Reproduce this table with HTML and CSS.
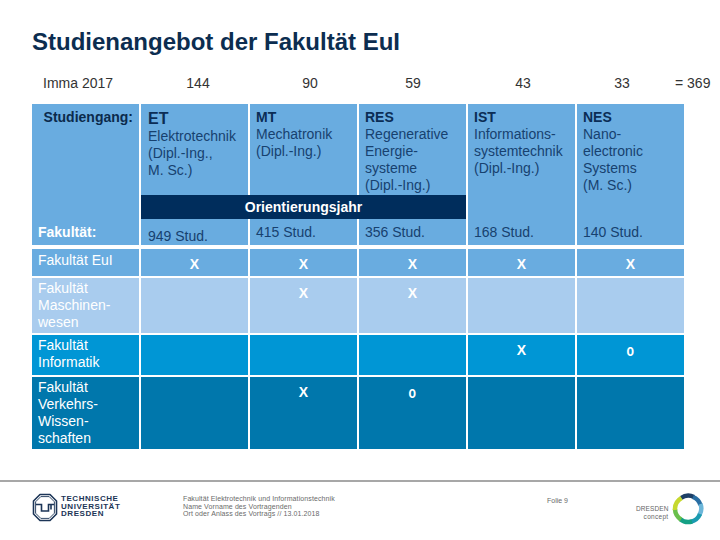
FILE: index.html
```html
<!DOCTYPE html>
<html lang="de">
<head>
<meta charset="utf-8">
<title>Studienangebot der Fakultät EuI</title>
<link rel="stylesheet" href="styles.css">
</head>
<body>
<div class="slide">
  <h1 class="title">Studienangebot der Fakultät EuI</h1>

  <div class="imma">
    <span>Imma 2017</span>
    <span class="num">144</span>
    <span class="num">90</span>
    <span class="num">59</span>
    <span class="num">43</span>
    <span class="num">33</span>
    <span class="sum">= 369</span>
  </div>

  <div class="head">
    <div class="hcell first">
      <span class="lbl-top">Studiengang:</span>
      <span class="lbl-bot">Fakultät:</span>
    </div>
    <div class="hcell c1"><span class="code big">ET</span><span class="desc">Elektrotechnik<br>(Dipl.-Ing.,<br>M. Sc.)</span></div>
    <div class="hcell c2"><span class="code">MT</span><span class="desc">Mechatronik<br>(Dipl.-Ing.)</span></div>
    <div class="hcell c3"><span class="code">RES</span><span class="desc">Regenerative<br>Energie-<br>systeme<br>(Dipl.-Ing.)</span></div>
    <div class="hcell c4 tall"><span class="code">IST</span><span class="desc">Informations-<br>systemtechnik<br>(Dipl.-Ing.)</span><span class="stud">168 Stud.</span></div>
    <div class="hcell c5 tall"><span class="code">NES</span><span class="desc">Nano-<br>electronic<br>Systems<br>(M. Sc.)</span><span class="stud">140 Stud.</span></div>
    <div class="bar">Orientierungsjahr</div>
    <div class="scell s1 low">949 Stud.</div>
    <div class="scell s2">415 Stud.</div>
    <div class="scell s3">356 Stud.</div>
  </div>

  <div class="body">
    <div class="row r-eui">
      <div class="label">Fakultät EuI</div>
      <div class="mark">X</div><div class="mark">X</div><div class="mark">X</div><div class="mark">X</div><div class="mark">X</div>
    </div>
    <div class="row r-mw">
      <div class="label">Fakultät<br>Maschinen-<br>wesen</div>
      <div class="mark"></div><div class="mark">X</div><div class="mark">X</div><div class="mark"></div><div class="mark"></div>
    </div>
    <div class="row r-inf">
      <div class="label">Fakultät<br>Informatik</div>
      <div class="mark"></div><div class="mark"></div><div class="mark"></div><div class="mark">X</div><div class="mark"><span class="o">o</span></div>
    </div>
    <div class="row r-vw">
      <div class="label">Fakultät<br>Verkehrs-<br>Wissen-<br>schaften</div>
      <div class="mark"></div><div class="mark">X</div><div class="mark"><span class="o">o</span></div><div class="mark"></div><div class="mark"></div>
    </div>
  </div>

  <footer class="footer">
    <div class="tu">
      <svg class="tu-emblem" width="26" height="29" viewBox="0 0 26 29">
        <path d="M8 1.5 H18 L24.5 8 V21 L18 27.5 H8 L1.5 21 V8 Z" fill="none" stroke="#1c3557" stroke-width="1.6" stroke-linejoin="round"/>
        <path d="M8.8 3.6 H17.2 L22.4 8.8 V20.2 L17.2 25.4 H8.8 L3.6 20.2 V8.8 Z" fill="none" stroke="#1c3557" stroke-width="0.9" stroke-linejoin="round"/>
        <path d="M4 11.5 H9.5 V18 H16.5 V11.5 H22 M19 11.5 V16.5" fill="none" stroke="#1c3557" stroke-width="1.6"/>
      </svg>
      <div class="tu-name"><span>TECHNISCHE</span><span>UNIVERSITÄT</span><span>DRESDEN</span></div>
    </div>
    <div class="meta">Fakultät Elektrotechnik und Informationstechnik<br>Name Vorname des Vortragenden<br>Ort oder Anlass des Vortrags // 13.01.2018</div>
    <div class="folie">Folie 9</div>
    <div class="concept">
      <div class="concept-text"><span class="dd">DRESDEN</span><span class="cc">concept</span></div>
      <svg class="ring" width="32" height="32" viewBox="0 0 32 32">
        <g fill="none" stroke-width="4.5" stroke-linecap="butt">
          <path d="M9 5 A13 13 0 0 1 22 4" stroke="#1d3f66"/>
          <path d="M21 4 A13 13 0 0 1 28.5 12" stroke="#2a6ea3"/>
          <path d="M28.5 11 A13 13 0 0 1 27.5 22" stroke="#6cb6d9"/>
          <path d="M28 21 A13 13 0 0 1 19 28.7" stroke="#1b9bb0"/>
          <path d="M20 28.5 A13 13 0 0 1 8 26" stroke="#15a085"/>
          <path d="M9 26.5 A13 13 0 0 1 3 16" stroke="#6abf4b"/>
          <path d="M3 17 A13 13 0 0 1 9.5 5" stroke="#c6d82e"/>
        </g>
      </svg>
    </div>
  </footer>
</div>
</body>
</html>
```
FILE: styles.css
```css
html, body {
  margin: 0;
  padding: 0;
  background: #ffffff;
}

.slide {
  width: 720px;
  height: 540px;
  overflow: hidden;
  font-family: "Liberation Sans", Arial, sans-serif;
  color: #333333;
}

.title {
  margin: 0;
  padding: 28px 0 0 32px;
  font-size: 24px;
  line-height: 28px;
  font-weight: bold;
  color: #0c2d50;
}

.imma {
  margin-top: 19px;
  padding-left: 43px;
  display: grid;
  grid-template-columns: 99px 112px 112px 94px 126px 72px auto;
  font-size: 14px;
  line-height: 16px;
  color: #333333;
}
.imma .num { text-align: center; }
.imma .sum { padding-left: 17px; }

/* header block */
.head {
  margin: 13px 0 0 32px;
  display: grid;
  grid-template-columns: repeat(6, 107px);
  grid-template-rows: 91px 24px 26px;
  column-gap: 2px;
}

.hcell {
  background: #69ace0;
  padding: 5px 6px 0 6px;
  display: flex;
  flex-direction: column;
  font-size: 14px;
  line-height: 17px;
}
.hcell.first {
  grid-column: 1;
  grid-row: 1 / 4;
  padding: 5px 6px 4px 6px;
  justify-content: space-between;
}
.hcell.tall { grid-row: 1 / 4; padding-bottom: 4px; }
.c1 { grid-column: 2; grid-row: 1; padding-left: 7px; }
.c2 { grid-column: 3; grid-row: 1; }
.c3 { grid-column: 4; grid-row: 1; }
.c4 { grid-column: 5; }
.c5 { grid-column: 6; }

.lbl-top {
  text-align: right;
  font-weight: bold;
  color: #0b2a4c;
}
.lbl-bot {
  font-weight: bold;
  color: #ffffff;
}

.code {
  font-weight: bold;
  font-size: 14px;
  color: #0b2d55;
}
.code.big { font-size: 16px; line-height: 19px; }
.desc { color: #17416f; }
.stud { margin-top: auto; color: #17416f; }

.bar {
  grid-column: 2 / 5;
  grid-row: 2;
  background: #002d5c;
  color: #ffffff;
  font-weight: bold;
  font-size: 14px;
  line-height: 24px;
  text-align: center;
}

.scell {
  grid-row: 3;
  background: #69ace0;
  color: #17416f;
  font-size: 14px;
  line-height: 17px;
  padding: 5px 6px 0 6px;
}
.s1 { grid-column: 2; padding-left: 7px; }
.s2 { grid-column: 3; }
.s3 { grid-column: 4; }
.scell.low { padding-top: 9px; }

/* body rows */
.body {
  margin: 4px 0 0 32px;
  display: flex;
  flex-direction: column;
  gap: 2px;
}
.row {
  display: grid;
  grid-template-columns: repeat(6, 107px);
  column-gap: 2px;
  color: #ffffff;
  font-size: 14px;
  line-height: 17px;
}
.row > div { background: var(--row-bg); }
.r-eui { --row-bg: #69ace0; height: 27px; }
.r-mw  { --row-bg: #a9ccee; height: 55px; }
.r-inf { --row-bg: #0096d5; height: 40px; }
.r-vw  { --row-bg: #0077ac; height: 72px; }

.label { padding: 2px 6px 0 6px; }
.r-eui .label { padding-top: 3px; }
.mark {
  text-align: center;
  font-weight: bold;
  padding-top: 7px;
}
.mark .o {
  display: inline-block;
  font-size: 17px;
  line-height: 17px;
  transform: scaleX(0.72);
}

/* footer */
.footer {
  margin-top: 31px;
  border-top: 2px solid #a7a7a7;
  display: flex;
  align-items: flex-start;
  height: 58px;
  color: #666666;
}
.tu {
  width: 183px;
  padding: 11px 0 0 32px;
  box-sizing: border-box;
  display: flex;
  gap: 3px;
}
.tu-name {
  padding-top: 2px;
  display: flex;
  flex-direction: column;
  font-size: 8px;
  line-height: 7.5px;
  letter-spacing: 0.55px;
  font-weight: bold;
  color: #1c3557;
}
.meta {
  width: 364px;
  padding-top: 13px;
  font-size: 7px;
  line-height: 7.5px;
  letter-spacing: 0.1px;
  color: #6a6a6a;
}
.folie {
  width: 89px;
  padding-top: 15px;
  font-size: 7px;
  line-height: 8px;
  color: #6a6a6a;
}
.concept {
  display: flex;
  align-items: flex-start;
  padding-top: 11px;
  gap: 4px;
}
.concept-text {
  display: flex;
  flex-direction: column;
  align-items: flex-end;
  padding-top: 12px;
  font-size: 6.5px;
  line-height: 8px;
  color: #666666;
}
.dd { letter-spacing: 0.1px; }
.cc { letter-spacing: 0.3px; }
```
